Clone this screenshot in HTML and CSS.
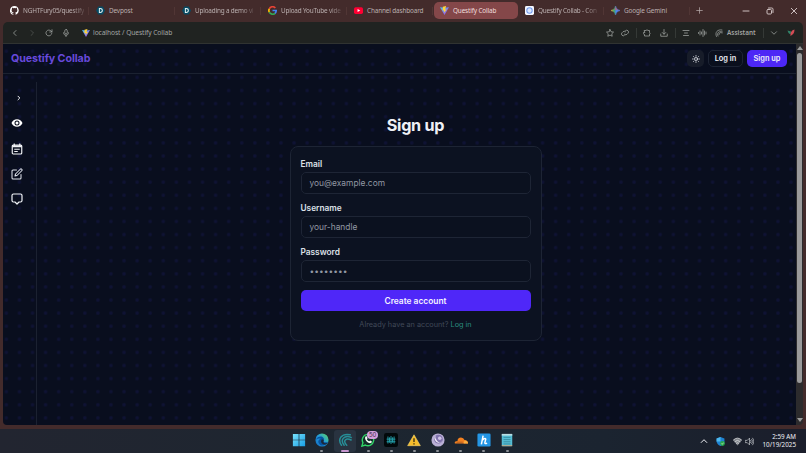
FILE: index.html
```html
<!DOCTYPE html>
<html lang="en">
<head>
<meta charset="utf-8">
<title>Questify Collab</title>
<link rel="stylesheet" href="styles.css">
</head>
<body>
<svg class="defs" aria-hidden="true">
  <defs>
    <linearGradient id="boltBlue" x1="0" y1="0" x2="1" y2="1"><stop offset="0" stop-color="#43c7ef"/><stop offset="1" stop-color="#b444e8"/></linearGradient>
    <linearGradient id="win" x1="0" y1="0" x2="1" y2="1"><stop offset="0" stop-color="#79e2fb"/><stop offset="1" stop-color="#189ee5"/></linearGradient>
    <linearGradient id="edge" x1="0" y1="1" x2="1" y2="0"><stop offset="0" stop-color="#126bc0"/><stop offset=".5" stop-color="#2299dc"/><stop offset="1" stop-color="#60dc60"/></linearGradient>
    <linearGradient id="gem" x1="0" y1="0" x2="1" y2="0"><stop offset="0" stop-color="#e5bd3d"/><stop offset=".35" stop-color="#42a56c"/><stop offset=".6" stop-color="#4b85f5"/></linearGradient>
    <symbol id="vite" viewBox="0 0 16 16"><path d="M0 2l8 14 8-14-8 1z" fill="url(#boltBlue)"/><path d="M11 0L5 1.3 4.8 8h2.6L7 12l5-6H9z" fill="#ffd43c"/></symbol>
    <symbol id="devpost" viewBox="0 0 16 16"><path d="M4 1h8l4 7-4 7H4L0 8z" fill="#074a63"/><path d="M6 4.5v7h1.5c5 0 5-7 0-7z" fill="none" stroke="#e1f2f4" stroke-width="1.8"/></symbol>
  </defs>
</svg>
<div class="browser">
  <div class="titlebar">
    <div class="tab"><svg class="fav" viewBox="0 0 16 16"><path fill="#fff" d="M8 0a8 8 0 0 0-2.5 15.6c.4.1.5-.2.5-.4v-1.5c-2.2.5-2.7-1-2.7-1-.4-.9-.9-1.2-.9-1.2-.7-.5.1-.5.1-.5.8.1 1.2.8 1.2.8.7 1.2 1.9.9 2.3.7.1-.5.3-.9.5-1.1-1.8-.2-3.6-.9-3.6-4 0-.9.3-1.6.8-2.1-.1-.2-.4-1 .1-2.1 0 0 .7-.2 2.2.8a7.500 7.500 0 0 1 4 0c1.500-1 2.200-.8 2.200-.8.4 1.100.2 1.900.1 2.100.5.600.8 1.300.8 2.100 0 3.100-1.900 3.700-3.700 3.900.3.300.6.800.6 1.500v2.200c0 .2.100.5.500.4A8 8 0 0 0 8 0z"/></svg><span class="tab-text long">NGHTFury05/questify</span></div>
    <div class="tab"><svg class="fav"><use href="#devpost"/></svg><span class="tab-text">Devpost</span></div>
    <div class="tab"><svg class="fav"><use href="#devpost"/></svg><span class="tab-text long">Uploading a demo vi</span></div>
    <div class="tab"><svg class="fav" viewBox="0 0 16 16" fill="none" stroke-width="3"><path d="M13 3.500A6.500 6.500 0 0 0 2.300 5" stroke="#ea4335"/><path d="M2.300 5a6.500 6.500 0 0 0 0 6" stroke="#fbbc05"/><path d="M2.300 11A6.500 6.500 0 0 0 12.500 13" stroke="#34a853"/><path d="M12.500 13a6.500 6.500 0 0 0 2-5H8" stroke="#4285f4"/></svg><span class="tab-text long">Upload YouTube vide</span></div>
    <div class="tab"><svg class="fav" viewBox="0 0 16 16"><rect y="2" width="16" height="12" rx="3" fill="#ff0033"/><path d="M6.300 5.200v5.600L11 8z" fill="#fff"/></svg><span class="tab-text">Channel dashboard</span></div>
    <div class="tab active"><svg class="fav"><use href="#vite"/></svg><span class="tab-text">Questify Collab</span></div>
    <div class="tab"><svg class="fav" viewBox="0 0 16 16"><rect width="16" height="16" rx="2.500" fill="#f4f7ff"/><circle cx="8" cy="8" r="4.800" fill="#dce8ff" stroke="#7199ed" stroke-width="1.800"/></svg><span class="tab-text long">Questify Collab - Con</span></div>
    <div class="tab"><svg class="fav" viewBox="0 0 16 16"><path d="M8 0q1 7 8 8-7 1-8 8-1-7-8-8 7-1 8-8z" fill="url(#gem)" stroke="url(#gem)"/><path d="M8 0q1 7 8 8L8 7 6 6q2-2 2-6z" fill="#e15351" opacity=".55"/></svg><span class="tab-text">Google Gemini</span></div>
    <svg class="newtab line" viewBox="0 0 10 10"><path d="M5 1v8M1 5h8"/></svg>
    <div class="window-buttons">
      <svg class="line" viewBox="0 0 8 8"><path d="M1 4h6"/></svg>
      <svg class="line" viewBox="0 0 8 8"><rect x="1" y="2.500" width="4.500" height="4.500" rx="1"/><path d="M2.500 1h3.300Q7 1 7 2.200v3.300"/></svg>
      <svg class="line" viewBox="0 0 8 8"><path d="M1.300 1.300l5.400 5.400M6.700 1.300L1.300 6.700"/></svg>
    </div>
  </div>
  <div class="toolbar">
    <div class="nav-icons">
      <svg class="line" viewBox="0 0 16 16"><path d="M10 3L5 8l5 5"/></svg>
      <svg class="line faded" viewBox="0 0 16 16"><path d="M6 3l5 5-5 5"/></svg>
      <svg class="line" viewBox="0 0 16 16"><path d="M13.500 9A5.800 5.800 0 1 1 12 4l2 2M14 1.500V6H9.500"/></svg>
      <svg class="line" viewBox="0 0 16 16"><rect x="5.500" y="1" width="5" height="9" rx="2.500"/><path d="M3 7.500c0 7 10 7 10 0M8 13v3"/></svg>
    </div>
    <svg class="site-icon"><use href="#vite"/></svg><span class="address">localhost / Questify Collab</span>
    <div class="tools">
      <svg class="line" viewBox="0 0 16 16"><path d="M8 1l2.100 4.500 5 .7-3.600 3.400.9 4.900L8 12.200l-4.400 2.300.9-4.900L1 6.200l5-.7z"/></svg>
      <svg class="line gap-link" viewBox="0 0 16 16"><path d="M8 4.500l1-1a3.500 3.500 0 0 1 5 5l-2 2a3.500 3.500 0 0 1-5 0M8 11.500l-1 1a3.500 3.500 0 0 1-5-5l2-2a3.500 3.500 0 0 1 5 0"/></svg>
      <i class="divider"></i>
      <svg class="line" viewBox="0 0 16 16"><path d="M3 3h3q2-3 4 0h3v4q3 1 0 3v4H3v-3q-3-1-3-3t3-1z"/></svg>
      <svg class="line gap-download" viewBox="0 0 16 16"><path d="M8 1v9M4.500 7L8 10.500 11.500 7M1.500 10v4.500h13V10"/></svg>
      <i class="divider wide"></i>
      <svg class="line" viewBox="0 0 16 16"><path d="M2 3h12M5 8h6M3 13h10"/></svg>
      <svg class="line gap-wave" viewBox="0 0 18 16"><path d="M1 7v2M4 4v8M7 6v4M10 1v14M13 4v8M16 6v4"/></svg>
      <svg class="line gap-ai" viewBox="0 0 16 16"><path d="M3 15C-1 7 5 0 14 2M6 14C3 8 8 3 15 6M8 11c0-4 4-5 6-3"/></svg>
      <b class="assistant">Assistant</b>
      <i class="divider"></i>
      <svg class="line" viewBox="0 0 16 16"><path d="M3 5.500l5 5 5-5"/></svg>
      <svg class="gap-leaf" viewBox="0 0 16 16"><path d="M1 3l7 2-1 6q-5-2-6-8z" fill="#31866b"/><path d="M15 1Q6 3 7 14q8-4 8-13z" fill="#d54c55"/></svg>
    </div>
  </div>
  <div class="viewport">
    <div class="page">
      <header class="header">
        <div class="brand">Questify Collab</div>
        <div class="actions">
          <button class="theme"><svg class="line" viewBox="0 0 16 16"><circle cx="8" cy="8" r="3"/><path d="M8 1v1.500M8 13.500V15M1 8h1.500M13.500 8H15M3 3l1 1M12 12l1 1M3 13l1-1M12 4l1-1"/></svg></button>
          <button class="login">Log in</button>
          <button class="signup">Sign up</button>
        </div>
      </header>
      <div class="body">
        <aside class="sidebar">
          <svg class="side-arrow line" viewBox="0 0 8 8"><path d="M3 2.200L4.800 4 3 5.800"/></svg>
          <svg viewBox="0 0 24 24"><path fill="#fff" fill-rule="evenodd" d="M12 4.500C7 4.500 2.700 7.600 1 12c1.700 4.400 6 7.500 11 7.500s9.300-3.100 11-7.500c-1.700-4.400-6-7.500-11-7.500zM12 17a5 5 0 1 1 0-10 5 5 0 0 1 0 10zm0-8a3 3 0 1 0 0 6 3 3 0 0 0 0-6z"/></svg>
          <svg viewBox="0 0 24 24" fill="none" stroke="#f3f5f8" stroke-width="2.300"><rect x="2.500" y="4" width="19" height="18" rx="2"/><path d="M2.500 6.500h19" stroke-width="4"/><path d="M6.500 1v5M17.500 1v5M6.500 12.500h11M6.500 17h7"/></svg>
          <svg viewBox="0 0 24 24" fill="none" stroke="#dfe3eb" stroke-width="2.100" stroke-linejoin="round" stroke-linecap="round"><path d="M11 4H4a2 2 0 0 0-2 2v14a2 2 0 0 0 2 2h14a2 2 0 0 0 2-2v-7M18.500 2.500a2.100 2.100 0 0 1 3 3L12 15l-4 1 1-4z"/></svg>
          <svg viewBox="0 0 24 24" fill="none" stroke="#f1f4f8" stroke-width="2.400" stroke-linejoin="round"><path d="M5 2h14a3 3 0 0 1 3 3v10a3 3 0 0 1-3 3h-3l-4 4-4-4H5a3 3 0 0 1-3-3V5a3 3 0 0 1 3-3z"/></svg>
        </aside>
        <main>
          <h1>Sign up</h1>
          <form class="card">
            <label>Email</label><div class="input">you@example.com</div>
            <label>Username</label><div class="input">your-handle</div>
            <label>Password</label><div class="input password">••••••••</div>
            <button type="button" class="create">Create account</button>
            <p>Already have an account? <a>Log in</a></p>
          </form>
        </main>
      </div>
    </div>
    <div class="scrollbar"><i class="up"></i><i class="thumb"></i><i class="down"></i></div>
  </div>
</div>
<footer class="taskbar">
  <div class="apps">
    <div class="app"><svg viewBox="0 0 16 16"><path fill="url(#win)" d="M1 1h6.600v6.600H1zM8.400 1H15v6.600H8.400zM1 8.400h6.600V15H1zM8.400 8.400H15V15H8.400z"/></svg></div>
    <div class="app running"><svg viewBox="0 0 16 16"><circle cx="8" cy="8" r="7.500" fill="url(#edge)"/><path d="M1 8c2-6 11-5 9 1-1 2 3 2 5 1-2 5-9 6-11 1-1-3 2-5 4-4-5-2-7 1-7 1z" fill="#0754a1"/><path d="M8 7c-2 2-1 5 2 6q3 1 5-2-7 2-5-3z" fill="#1c2836"/></svg></div>
    <div class="app current running"><svg viewBox="0 0 16 16" fill="none" stroke="#278f98" stroke-width="1.700" stroke-linecap="round"><path d="M4 14C-1 7 4 0 14 2M7 14C2 8 7 2 15 5M10 14C5 9 9 5 15 8"/></svg></div>
    <div class="app running"><svg viewBox="0 0 16 16"><path d="M1 15l1.200-4A6.500 6.500 0 1 1 5 13.800z" fill="#132d29" stroke="#31d366" stroke-width="1.600"/><path d="M5 4l1.500-.3L7.500 6l-.8 1Q8 9 9.500 9.500l1-1L12.500 9.700q0 2-2 2C7 11.500 3.500 7 5 4z" fill="#effff2"/></svg><span class="badge">50</span></div>
    <div class="app running"><svg viewBox="0 0 16 16"><rect width="16" height="16" rx="2.500" fill="#02080a"/><path d="M4.500 4v8M6.300 5v6M8 3.500v9M9.700 5v6M11.500 4v8M3 7h10M3 10h10" fill="none" stroke="#229eaa" stroke-width="1.100"/></svg></div>
    <div class="app running"><svg viewBox="0 0 16 16"><path d="M8 2l7.300 12.500H.7z" fill="#f6bd2b" stroke="#ffe37a" stroke-width=".6"/><path d="M8 6v4.300M8 11.700v1.500" stroke="#392d13" stroke-width="1.500"/></svg></div>
    <div class="app running"><svg viewBox="0 0 16 16"><circle cx="8" cy="8" r="7.500" fill="#b9afd5"/><circle cx="8.500" cy="7" r="5" fill="#8174ad"/><path d="M5 3a5 5 0 1 0 8 6q-3 3-6 0t-2-6z" fill="#f1edf8"/><circle cx="10" cy="6" r="2" fill="#cfc3e8"/></svg></div>
    <div class="app running"><svg viewBox="0 0 16 16"><path d="M1 12q-1-3 3-3 0-4 4-4 3 0 4 3 4 0 4 4z" fill="#f38020"/><path d="M11 12l1-3.500q4 0 4 3.500z" fill="#faae40"/><path d="M3 10.500h7" stroke="#8f4b20" stroke-width=".7"/></svg></div>
    <div class="app running"><svg viewBox="0 0 16 16"><rect x=".5" y=".5" width="15" height="15" rx="1.500" fill="#2496e5"/><path d="M7 3L5 13M5.500 9Q9 5 10 7l-1 4q0 2 2.500.5" fill="none" stroke="#fff" stroke-width="1.700"/></svg></div>
    <div class="app running"><svg viewBox="0 0 16 16"><rect x="2" y="1" width="12" height="14" rx="1" fill="#55bdd4"/><path d="M2 2h12" stroke="#b8dde2" stroke-width="2"/><path d="M4 5h8M4 7.500h8M4 10h8M4 12.500h8" stroke="#2c7e94" stroke-width=".8"/><path d="M2 14.500h12" stroke="#d0a477"/></svg></div>
  </div>
  <div class="tray">
    <svg class="line chevron" viewBox="0 0 8 8"><path d="M1.200 5.500L4 2.700l2.800 2.800"/></svg>
    <svg class="shield" viewBox="0 0 16 16"><path d="M8 0l7 2.500V8q-1 6-7 8-6-2-7-8V2.500z" fill="#1e83d2"/><path d="M8 0v8H1V2.500z" fill="#4db7ed"/><circle cx="11.500" cy="11.500" r="4.300" fill="#27a84b"/><path d="M9.500 11.500l1.500 1.500 2.500-3" fill="none" stroke="#fff"/></svg>
    <svg class="wifi" viewBox="0 0 16 16"><path d="M0 5.500q8-7 16 0L8 15z" fill="#80858c"/><path d="M.5 5.500q7.500-7 15 0M3 8.500q5-5 10 0M5.500 11.500q2.500-2.500 5 0M8 14h.1" fill="none" stroke="#e5e7e9" stroke-width="1.300"/></svg>
    <svg class="volume line" viewBox="0 0 16 16"><path d="M1 6h3l4-4v12l-4-4H1zM10 6q2 2 0 4M12 4q4 4 0 8M13.500 2q5 6 0 12"/></svg>
    <div class="clock">2:59 AM<br>10/19/2025</div>
  </div>
</footer>
</body>
</html>
```
FILE: styles.css
```css
* { box-sizing: border-box; }
body { margin: 0; width: 806px; height: 453px; overflow: hidden; background: #432b2b; font-family: Inter, sans-serif; color: #eef0f5; }
svg { display: block; flex: none; }
button { font: inherit; color: inherit; padding: 0; }
.defs { position: absolute; width: 0; height: 0; }
.line { fill: none; stroke: currentColor; stroke-linecap: round; stroke-linejoin: round; }
.browser { height: 429px; padding: 0 3px 4px; background: #432b2b; display: flex; flex-direction: column; }
.titlebar { height: 22px; flex: none; display: flex; align-items: center; padding-left: 1px; font: 6.4px "Noto Sans", sans-serif; letter-spacing: -.14px; color: #bbb0b0; }
.tab { width: 86px; height: 17px; padding-left: 6px; display: flex; align-items: center; gap: 4px; position: relative; top: -1px; flex: none; }
.tab::after { content: ""; position: absolute; right: 1px; top: 5px; height: 8px; width: 1px; background: #513635; }
.fav { width: 9px; height: 9px; }
.tab-text { white-space: nowrap; }
.long { letter-spacing: -.19px; mask-image: linear-gradient(90deg, #000 80%, rgba(0, 0, 0, .25)); }
.tab.active { width: 84px; margin-right: 1px; border-radius: 5px; background: #844749; color: #f1dfdf; }
.tab.active::after { display: none; }
.newtab { width: 7px; height: 7px; margin-left: 5px; position: relative; top: -1px; }
.window-buttons { display: flex; gap: 16px; margin-left: auto; margin-right: 5px; color: #cdbfbf; }
.window-buttons svg { width: 8px; height: 8px; }
.toolbar { height: 22px; flex: none; border-radius: 5px 5px 0 0; border-bottom: 1px solid #303331; background: #202321; color: #a2a5a3; display: flex; align-items: center; padding-left: 8px; font: 6.65px "Noto Sans", sans-serif; }
.nav-icons { display: flex; gap: 9px; }
.nav-icons svg, .tools svg { width: 8px; height: 8px; stroke-width: 1.5; }
.faded { opacity: .4; }
.site-icon { width: 8px; height: 8px; margin-left: 12px; }
.address { margin-left: 3px; letter-spacing: -.07px; }
.tools { display: flex; align-items: center; margin-left: auto; padding-right: 8px; }
.tools .gap-link { margin-left: 7px; }
.divider { width: 1px; height: 10px; margin: 0 6px 0 7px; background: #353936; }
.tools .gap-download { margin-left: 9px; }
.tools .gap-wave { margin-left: 8px; width: 9px; }
.tools .gap-ai { margin-left: 8px; }
.assistant { margin-left: 4px; width: 29px; font-size: 6.4px; font-weight: 600; }
.tools .gap-leaf { margin-left: 9px; }
.viewport { height: 381px; flex: none; display: flex; border-radius: 0 0 4px 4px; overflow: hidden; }
.page { width: 793px; background-color: #090e1e; background-image: radial-gradient(circle, #101338 0, #0e1230 1.3px, transparent 2.4px); background-size: 13.09px 13.1px; background-position: -3.2px .7px; }
.header { height: 30px; border-bottom: 1px solid #1b2231; padding: 0 9px 0 8px; display: flex; align-items: center; justify-content: space-between; }
.brand { font-size: 10.7px; line-height: 14px; font-weight: 700; color: #6749db; letter-spacing: -.08px; }
.actions { display: flex; gap: 4px; font-size: 7.4px; font-weight: 600; }
.actions button { height: 17px; border-radius: 5px; border: 1px solid #1d2434; }
.actions .theme { width: 17px; background: #171c29; border: 0; display: flex; align-items: center; justify-content: center; }
.theme svg { width: 8px; height: 8px; stroke-width: 1.5; }
.login { width: 35px; background: #0a0f1d; }
.actions .signup { width: 40px; background: #4d27f6; border: 0; }
.body { display: flex; height: 351px; }
.sidebar { width: 34px; margin-top: 8px; border-right: 1px solid #1b2131; padding: 12px 0 0 8px; display: flex; flex-direction: column; align-items: flex-start; gap: 13.2px; }
.sidebar svg { width: 12px; height: 12px; }
.sidebar .side-arrow { width: 8px; height: 8px; margin: 0 0 2.300px 4px; }
main { flex: 1; padding: 41px 2px 0 0; display: flex; flex-direction: column; align-items: center; }
h1 { margin: 0; height: 20px; line-height: 20px; font-size: 16.2px; font-weight: 700; letter-spacing: -.25px; }
.card { width: 252px; height: 195px; margin-top: 11px; border: 1px solid #1d2434; border-radius: 8px; background: #0c1221; padding: 11px 10px; display: flex; flex-direction: column; }
.card label { height: 12px; line-height: 12px; font-size: 8.3px; font-weight: 600; margin-bottom: 2px; color: #dce0e7; }
.input { height: 22px; border: 1px solid #1e2535; border-radius: 5px; padding-left: 8px; line-height: 20px; font-size: 8.4px; color: #9298a3; background: #0b111f; margin-bottom: 8px; }
.password { letter-spacing: .05px; }
.create { height: 21px; flex: none; background: #4f27f8; border: 0; border-radius: 5px; font-size: 8.4px; font-weight: 600; color: #f3f1ff; }
.card p { margin: 9px 0 0; text-align: center; font-size: 7.3px; line-height: 10px; color: #414958; }
.card a { color: #2b8c80; }
.scrollbar { width: 7px; background: #2c2b2d; display: flex; flex-direction: column; align-items: center; padding: 2px 0 3px; }
.up { border: 3px solid transparent; border-top: 0; border-bottom: 4px solid #9b9b9b; }
.thumb { width: 5px; height: 330px; border-radius: 3px; margin-top: 3px; background: #9a9a9b; }
.down { border: 3px solid transparent; border-bottom: 0; border-top: 4px solid #9b9b9b; margin-top: auto; }
.taskbar { height: 24px; background: linear-gradient(90deg, #222530, #1d2630 45%, #1b2430 75%, #1b1e2b); display: flex; align-items: center; justify-content: flex-end; }
.apps { display: flex; gap: 1.15px; margin-right: 181px; }
.app { width: 22px; height: 22px; padding-top: 3px; display: flex; justify-content: center; position: relative; border-radius: 3px; }
.app svg { width: 14px; height: 14px; }
.current { background: #293340; }
.running::after { content: ""; position: absolute; bottom: 0; left: 9.500px; width: 3px; height: 2px; border-radius: 1px; background: #8b9096; }
.current::after { left: 7px; width: 8px; background: #c797cf; }
.badge { position: absolute; right: 1px; top: 1px; width: 11px; height: 8px; border-radius: 4px; background: #d3a0dd; color: #3b2744; text-align: center; font-size: 6px; line-height: 8px; }
.tray { width: 107px; display: flex; align-items: center; }
.chevron { width: 8px; height: 8px; margin-left: 1px; }
.shield { width: 9px; height: 9px; margin-left: 8px; }
.wifi { width: 9px; height: 9px; margin-left: 8px; }
.volume { width: 9px; height: 9px; margin-left: 3px; }
.clock { margin-left: auto; margin-right: 10px; font: 6.3px/8.5px "Noto Sans", sans-serif; text-align: right; }
```
